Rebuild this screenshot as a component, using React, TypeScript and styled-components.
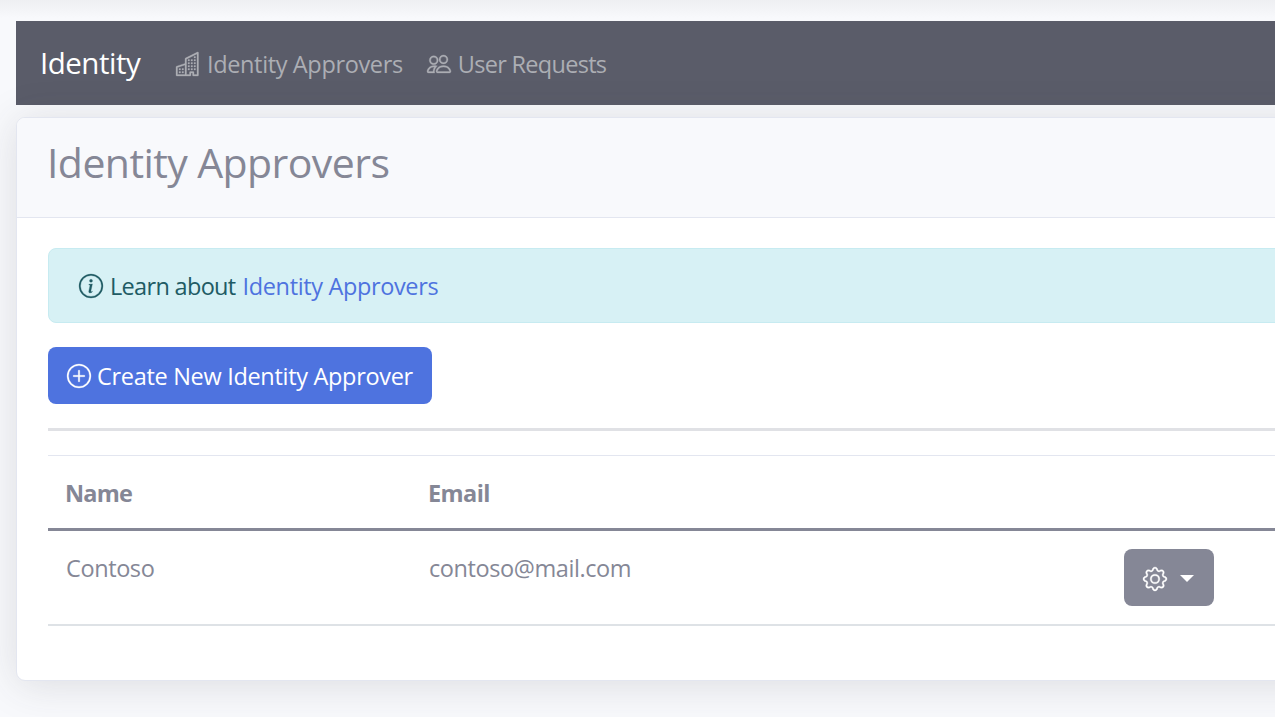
import React from "react";
import styled, { createGlobalStyle } from "styled-components";
import { BsBuildings, BsPeople, BsInfoCircle, BsPlusCircle, BsGear } from "react-icons/bs";

const GlobalStyle = createGlobalStyle`
  *, *::before, *::after { box-sizing: border-box; }
  body {
    margin: 0;
    background: #f8f9fc;
    color: #858796;
    font-family: "Segoe UI", "Open Sans", "Noto Sans", sans-serif;
    font-size: 23.5px;
    line-height: 36px;
    overflow: hidden;
  }
  svg { display: block; flex: none; stroke-width: 0.2px; overflow: visible; }
`;

const Label = styled.span<{ $spacing?: number }>`
  letter-spacing: ${(p) => p.$spacing ?? 0}px;
  white-space: nowrap;
`;

const Page = styled.div`
  height: 717px;
  padding: 21px 0 0 16px;
  overflow: hidden;
  background: linear-gradient(#eeeff2, #f8f9fc 18px);
`;

const Content = styled.main`
  width: 1320px;
`;

const Navbar = styled.nav`
  display: flex;
  align-items: center;
  height: 84px;
  padding: 2px 24px 0;
  background: #5a5c69;
`;

const Brand = styled.a`
  width: 136px;
  margin-top: -3px;
  color: #fff;
  font-size: 29.5px;
`;

const NavItem = styled.a`
  display: flex;
  align-items: center;
  gap: 7px;
  margin-right: 24px;
  color: #acaeb4;
`;

const Card = styled.section`
  height: 564px;
  margin-top: 12px;
  border: 1px solid #e3e6f0;
  border-radius: 9px;
  background: #fff;
  box-shadow: 0 3.6px 42px rgba(58, 59, 69, 0.15);
`;

const CardHeader = styled.header`
  height: 100px;
  padding: 18px 30px;
  border-bottom: 1px solid #e3e6f0;
  border-radius: 8px 8px 0 0;
  background: #f8f9fc;
`;

const Title = styled.h1`
  margin: 0;
  font-size: 41px;
  font-weight: 400;
  line-height: 52px;
`;

const CardBody = styled.div`
  padding: 30px 31px;
`;

const Alert = styled.div`
  display: flex;
  align-items: center;
  gap: 7px;
  height: 75px;
  padding: 0 30px;
  border: 1px solid #c7ebf1;
  border-radius: 8px;
  background: #d7f1f5;
  color: #205b64;
`;

const Link = styled.a`
  color: #4e73df;
`;

const Button = styled.button<{ $tone: string; $width: number }>`
  display: flex;
  align-items: center;
  gap: 6px;
  width: ${(p) => p.$width}px;
  height: 57px;
  padding: 1px 19px 0;
  border: 0;
  border-radius: 8px;
  background: ${(p) => p.$tone};
  color: #fff;
  font: inherit;
`;

const CreateButton = styled(Button)`
  margin-top: 24px;
`;

const MenuButton = styled(Button)`
  gap: 7px;
  padding-top: 3px;
`;

const Divider = styled.hr`
  height: 3px;
  margin: 24px 0;
  border: 0;
  background: #e0e1e5;
`;

const Row = styled.div`
  display: grid;
  grid-template-columns: 363px 695px 90px;
  height: 95px;
  padding: 18px 18px 0;
  border-bottom: 2px solid #dee2e6;
`;

const HeadRow = styled(Row)`
  height: 76px;
  padding: 19px 17px 0;
  border-top: 1px solid #e3e6f0;
  border-bottom: 3px solid #858796;
  font-weight: 700;
`;

const Cell = styled.div`
  padding-top: 1px;
`;

const Caret = styled.span`
  margin: -2px 0 0 6px;
  border: 7px solid transparent;
  border-top-color: #fff;
  border-bottom: 0;
`;

export default function App() {
  return (
    <>
      <GlobalStyle />
      <Page>
        <Content>
          <Navbar>
            <Brand><Label $spacing={-0.5}>Identity</Label></Brand>
            <NavItem>
              <BsBuildings size={24} />
              <Label $spacing={-0.36}>Identity Approvers</Label>
            </NavItem>
            <NavItem>
              <BsPeople size={24} />
              <Label $spacing={-0.7}>User Requests</Label>
            </NavItem>
          </Navbar>
          <Card>
            <CardHeader>
              <Title><Label $spacing={-0.58}>Identity Approvers</Label></Title>
            </CardHeader>
            <CardBody>
              <Alert>
                <BsInfoCircle size={24} />
                <Label $spacing={-0.68}>Learn about</Label>
                <Link><Label $spacing={-0.36}>Identity Approvers</Label></Link>
              </Alert>
              <CreateButton $tone="#4e73df" $width={384}>
                <BsPlusCircle size={24} />
                <Label $spacing={-0.31}>Create New Identity Approver</Label>
              </CreateButton>
              <Divider />
              <HeadRow>
                <Label $spacing={-0.8}>Name</Label>
                <Label $spacing={-0.6}>Email</Label>
              </HeadRow>
              <Row>
                <Cell><Label $spacing={-0.4}>Contoso</Label></Cell>
                <Cell><Label $spacing={-0.41}>contoso@mail.com</Label></Cell>
                <MenuButton $tone="#858796" $width={90} aria-label="Settings">
                  <BsGear size={24} />
                  <Caret />
                </MenuButton>
              </Row>
            </CardBody>
          </Card>
        </Content>
      </Page>
    </>
  );
}
